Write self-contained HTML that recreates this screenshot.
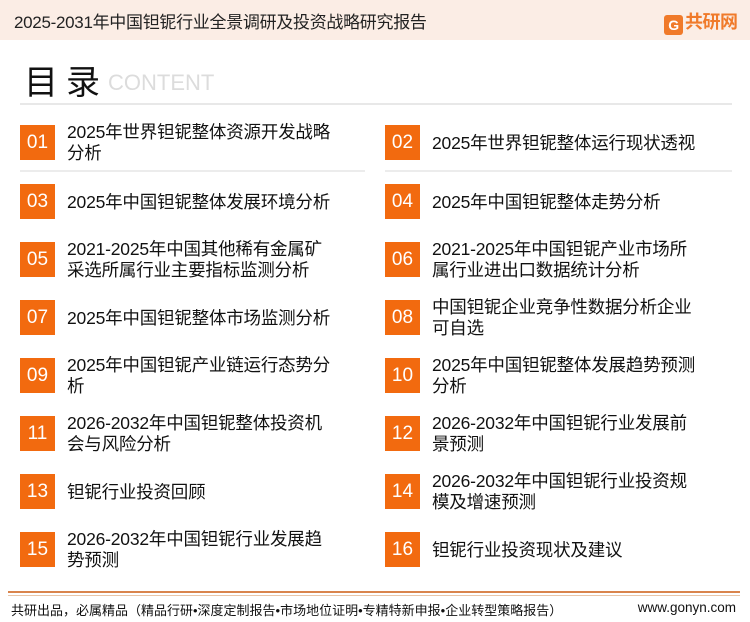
<!DOCTYPE html>
<html><head><meta charset="utf-8"><style>
*{margin:0;padding:0;box-sizing:border-box}
body{width:750px;height:622px;background:#fff;font-family:"Liberation Sans","Noto Sans CJK SC",sans-serif;position:relative;overflow:hidden;color:#111}
.hdr{position:absolute;left:0;top:0;width:750px;height:40px;background:#fbede5}
.hdr .t{position:absolute;left:14px;top:8px;font-size:17px;color:#222;letter-spacing:-0.3px}
.logo{position:absolute;left:664px;top:8px;font-size:18px;font-weight:bold;color:#f07a2a;letter-spacing:-0.5px}
.logo b{display:inline-block;width:19px;height:20px;background:#f07a2a;color:#fff;border-radius:3px;font-size:14px;text-align:center;line-height:20px;margin-right:2px;vertical-align:-2px}
.ml{position:absolute;left:24px;top:55px;font-size:34px;letter-spacing:8px;color:#111}
.ct{position:absolute;left:108px;top:70px;font-size:22px;color:#dcdcdc}
.hl{position:absolute;left:20px;top:103px;width:712px;height:2px;background:#e8e8e8}
.box{position:absolute;width:35px;height:35px;background:#f26a0f;color:#fff;font-size:19px;text-align:center;line-height:35px}
.tx{position:absolute;font-size:17.5px;line-height:21px;white-space:nowrap;color:#111;letter-spacing:-0.2px}
.sep{position:absolute;height:2px;background:#ececec}
.f1{position:absolute;left:8px;top:591px;width:732px;height:2px;background:#d9844c}
.f2{position:absolute;left:8px;top:595px;width:732px;height:1px;background:#e8c6aa}
.ft{position:absolute;left:11px;top:600px;font-size:13px;color:#111}
.fr{position:absolute;right:14px;top:600px;font-size:13.5px;color:#111}
</style></head><body>
<div class="hdr"><div class="t">2025-2031年中国钽铌行业全景调研及投资战略研究报告</div><div class="logo"><b>G</b>共研网</div></div>
<div class="ml">目录</div><div class="ct">CONTENT</div>
<div class="hl"></div>

<div class="box" style="left:20px;top:125px">01</div><div class="tx" style="left:67px;top:122px">2025年世界钽铌整体资源开发战略<br>分析</div>
<div class="box" style="left:385px;top:125px">02</div><div class="tx" style="left:432px;top:133px">2025年世界钽铌整体运行现状透视</div>
<div class="sep" style="left:20px;top:170px;width:345px"></div><div class="sep" style="left:385px;top:170px;width:347px"></div>

<div class="box" style="left:20px;top:184px">03</div><div class="tx" style="left:67px;top:192px">2025年中国钽铌整体发展环境分析</div>
<div class="box" style="left:385px;top:184px">04</div><div class="tx" style="left:432px;top:192px">2025年中国钽铌整体走势分析</div>

<div class="box" style="left:20px;top:242px">05</div><div class="tx" style="left:67px;top:239px">2021-2025年中国其他稀有金属矿<br>采选所属行业主要指标监测分析</div>
<div class="box" style="left:385px;top:242px">06</div><div class="tx" style="left:432px;top:239px">2021-2025年中国钽铌产业市场所<br>属行业进出口数据统计分析</div>

<div class="box" style="left:20px;top:300px">07</div><div class="tx" style="left:67px;top:308px">2025年中国钽铌整体市场监测分析</div>
<div class="box" style="left:385px;top:300px">08</div><div class="tx" style="left:432px;top:297px">中国钽铌企业竞争性数据分析企业<br>可自选</div>

<div class="box" style="left:20px;top:358px">09</div><div class="tx" style="left:67px;top:355px">2025年中国钽铌产业链运行态势分<br>析</div>
<div class="box" style="left:385px;top:358px">10</div><div class="tx" style="left:432px;top:355px">2025年中国钽铌整体发展趋势预测<br>分析</div>

<div class="box" style="left:20px;top:416px">11</div><div class="tx" style="left:67px;top:413px">2026-2032年中国钽铌整体投资机<br>会与风险分析</div>
<div class="box" style="left:385px;top:416px">12</div><div class="tx" style="left:432px;top:413px">2026-2032年中国钽铌行业发展前<br>景预测</div>

<div class="box" style="left:20px;top:474px">13</div><div class="tx" style="left:67px;top:482px">钽铌行业投资回顾</div>
<div class="box" style="left:385px;top:474px">14</div><div class="tx" style="left:432px;top:471px">2026-2032年中国钽铌行业投资规<br>模及增速预测</div>

<div class="box" style="left:20px;top:532px">15</div><div class="tx" style="left:67px;top:529px">2026-2032年中国钽铌行业发展趋<br>势预测</div>
<div class="box" style="left:385px;top:532px">16</div><div class="tx" style="left:432px;top:540px">钽铌行业投资现状及建议</div>

<div class="f1"></div><div class="f2"></div>
<div class="ft">共研出品，必属精品（精品行研•深度定制报告•市场地位证明•专精特新申报•企业转型策略报告）</div>
<div class="fr">www.gonyn.com</div>
</body></html>
